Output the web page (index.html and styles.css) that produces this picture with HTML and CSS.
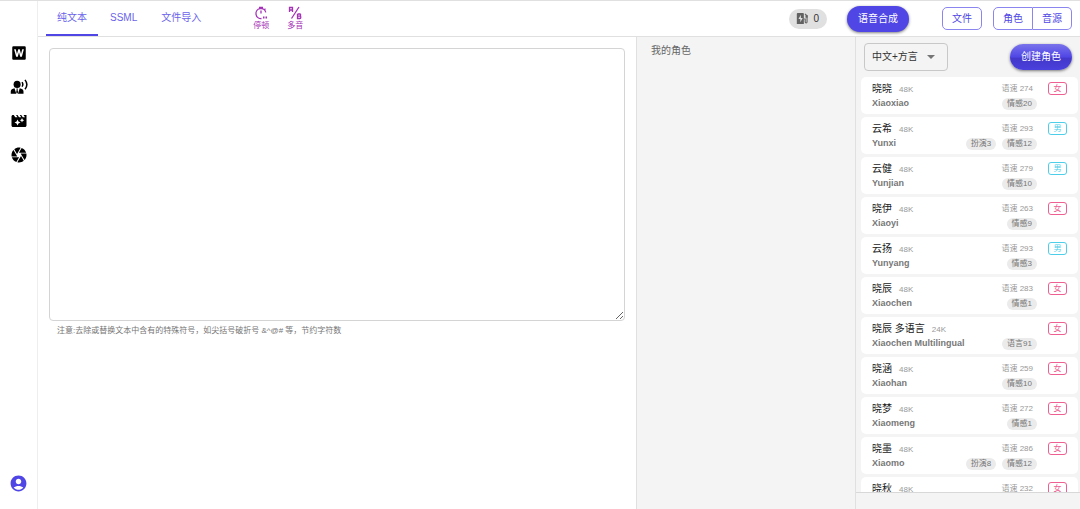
FILE: index.html
```
<!DOCTYPE html>
<html lang="zh-CN">
<head>
<meta charset="utf-8">
<meta name="viewport" content="width=device-width, initial-scale=1">
<title>语音合成</title>
<link rel="stylesheet" href="styles.css">
</head>
<body>
<div class="app">
  <nav class="sidebar" aria-label="主导航">
    <button class="side-btn" type="button" aria-label="文本">
      <svg class="icon" viewBox="0 0 24 24"><path fill-rule="evenodd" d="M4.500 3h15A1.500 1.500 0 0 1 21 4.500v15a1.500 1.500 0 0 1-1.500 1.500h-15A1.500 1.500 0 0 1 3 19.500v-15A1.500 1.500 0 0 1 4.500 3zM5.500 7l2.700 10h2.200L12 11l1.600 6h2.200l2.700-10h-2.200l-1.600 6.400L13 7h-2l-1.700 6.400L7.700 7z"/></svg>
    </button>
    <button class="side-btn" type="button" aria-label="语音">
      <svg class="icon" viewBox="0 0 24 24"><circle cx="9.500" cy="8.500" r="4.700"/><path d="M1 21v-3c0-2.400 2.200-3.800 5-4.300L8.400 21zM18 21v-3c0-2.400-2.200-3.800-5-4.300L10.600 21zM8.500 14h2l-.4 1.500.7 3.500-1.300 2-1.300-2 .7-3.500z"/><path class="line" d="M16 5.500q2.200 3 0 6M20 2.500q5 6.200 0 12.500"/></svg>
    </button>
    <button class="side-btn" type="button" aria-label="视频">
      <svg class="icon" viewBox="0 0 24 24"><path d="M18 4l2 3h-3l-2-3h-2l2 3h-3l-2-3H8l2 3H7L5 4H4c-1.100 0-1.990.9-1.990 2L2 18c0 1.100.9 2 2 2h16c1.100 0 2-.9 2-2V4h-4zm-6.750 11.250L10 18l-1.250-2.750L6 14l2.750-1.250L10 10l1.250 2.750L14 14l-2.750 1.250zm5.690-3.310L16 14l-.94-2.060L13 11l2.060-.94L16 8l.94 2.060L19 11l-2.060.94z"/></svg>
    </button>
    <button class="side-btn" type="button" aria-label="图像">
      <svg class="icon" viewBox="0 0 24 24"><path d="M9.400 10.500l4.770-8.260C13.470 2.090 12.750 2 12 2c-2.400 0-4.600.85-6.320 2.250l3.660 6.350.06-.1zM21.540 9c-.92-2.920-3.150-5.260-6-6.340L11.880 9h9.660zm.26 1h-7.490l.29.5 4.760 8.250C21 16.970 22 14.610 22 12c0-.69-.07-1.350-.2-2zM8.540 12l-3.900-6.750C3.010 7.030 2 9.390 2 12c0 .69.07 1.350.2 2h7.490l-1.150-2zm-6.080 3c.92 2.920 3.150 5.260 6 6.340L12.120 15H2.460zm11.270 0l-3.900 6.760c.7.15 1.420.24 2.170.24 2.400 0 4.600-.85 6.320-2.250l-3.660-6.350-.93 1.600z"/></svg>
    </button>
    <button class="side-btn account" type="button" aria-label="账户">
      <svg class="icon" viewBox="0 0 24 24"><path d="M12 2C6.480 2 2 6.480 2 12s4.480 10 10 10 10-4.480 10-10S17.520 2 12 2zm0 4c1.930 0 3.500 1.570 3.500 3.500S13.930 13 12 13s-3.500-1.570-3.500-3.500S10.070 6 12 6zm0 14c-2.030 0-4.430-.82-6.140-2.880C7.550 15.800 9.680 15 12 15s4.450.8 6.140 2.120C16.430 19.180 14.030 20 12 20z"/></svg>
    </button>
  </nav>

  <div class="content">
    <header class="topbar">
      <div class="tabs" role="tablist">
        <button class="tab active" type="button" role="tab" aria-selected="true">纯文本</button>
        <button class="tab" type="button" role="tab" aria-selected="false">SSML</button>
        <button class="tab" type="button" role="tab" aria-selected="false">文件导入</button>
      </div>
      <div class="tools">
        <button class="tool" type="button">
          <svg class="tool-icon" viewBox="0 0 14 14"><path class="line thin" d="M5 1.500h4M7 4.500v3M11.800 6.300A5 5 0 1 0 7.500 12.500M10.300 3.700l1.200-1"/><path d="M9 10.500h1.500v2H9zM11.500 10.500H13v2h-1.500z"/></svg>
          停顿
        </button>
        <button class="tool" type="button">
          <svg class="tool-icon" viewBox="0 0 14 14"><path class="line thin" d="M1.500 6V1.500h3V6M1.500 4h3M11 1L3.500 12.500M9.500 8v4.500H12q.8 0 .8-1.200T12 10.200H9.500M12 10.200q.6 0 .6-1.100T12 8H9.500"/></svg>
          多音
        </button>
      </div>
      <div class="actions">
        <div class="quota">
          <svg class="quota-icon" viewBox="0 0 24 24"><path fill-rule="evenodd" d="M3 2h10a1.500 1.500 0 0 1 1.500 1.500V22H1.500V3.500A1.500 1.500 0 0 1 3 2zM9 5l-4.500 8H8v6l4.500-8H9z"/><path class="line" d="M15 13h2v5.500q0 1.700 1.700 1.700t1.700-1.700V7L16.500 3.500"/><path d="M17.500 6h4v4.500h-4z"/></svg>
          <span>0</span>
        </div>
        <button class="pill synth" type="button">语音合成</button>
        <button class="outline file" type="button">文件</button>
        <div class="btn-group">
          <button class="outline" type="button">角色</button>
          <button class="outline" type="button">音源</button>
        </div>
      </div>
    </header>

    <main class="panels">
      <section class="editor">
        <textarea class="text-input" rows="17" aria-label="文本" aria-describedby="hint"></textarea>
        <p class="hint" id="hint">注意:去除或替换文本中含有的特殊符号，如尖括号破折号 &amp;^@# 等，节约字符数</p>
      </section>

      <section class="roles">
        <h2 class="roles-title">我的角色</h2>
      </section>

      <section class="sources">
        <div class="filter">
          <div class="select-wrap">
            <select class="select" aria-label="语言">
              <option>中文+方言</option>
            </select>
            <svg class="caret" viewBox="0 0 8 4"><path d="M0 0h8L4 4z"/></svg>
          </div>
          <button class="pill create" type="button">创建角色</button>
        </div>
        <ul class="voices">
          <li class="voice">
            <div class="names"><div class="name">晓晓<span class="rate">48K</span></div><div class="latin">Xiaoxiao</div></div>
            <div class="stats"><div class="speed">语速 274</div><div class="chips"><span class="chip">情感20</span></div></div>
            <span class="gender female">女</span>
          </li>
          <li class="voice">
            <div class="names"><div class="name">云希<span class="rate">48K</span></div><div class="latin">Yunxi</div></div>
            <div class="stats"><div class="speed">语速 293</div><div class="chips"><span class="chip">扮演3</span><span class="chip">情感12</span></div></div>
            <span class="gender male">男</span>
          </li>
          <li class="voice">
            <div class="names"><div class="name">云健<span class="rate">48K</span></div><div class="latin">Yunjian</div></div>
            <div class="stats"><div class="speed">语速 279</div><div class="chips"><span class="chip">情感10</span></div></div>
            <span class="gender male">男</span>
          </li>
          <li class="voice">
            <div class="names"><div class="name">晓伊<span class="rate">48K</span></div><div class="latin">Xiaoyi</div></div>
            <div class="stats"><div class="speed">语速 263</div><div class="chips"><span class="chip">情感9</span></div></div>
            <span class="gender female">女</span>
          </li>
          <li class="voice">
            <div class="names"><div class="name">云扬<span class="rate">48K</span></div><div class="latin">Yunyang</div></div>
            <div class="stats"><div class="speed">语速 293</div><div class="chips"><span class="chip">情感3</span></div></div>
            <span class="gender male">男</span>
          </li>
          <li class="voice">
            <div class="names"><div class="name">晓辰<span class="rate">48K</span></div><div class="latin">Xiaochen</div></div>
            <div class="stats"><div class="speed">语速 283</div><div class="chips"><span class="chip">情感1</span></div></div>
            <span class="gender female">女</span>
          </li>
          <li class="voice">
            <div class="names"><div class="name">晓辰 多语言<span class="rate">24K</span></div><div class="latin">Xiaochen Multilingual</div></div>
            <div class="stats"><div class="speed"></div><div class="chips"><span class="chip">语言91</span></div></div>
            <span class="gender female">女</span>
          </li>
          <li class="voice">
            <div class="names"><div class="name">晓涵<span class="rate">48K</span></div><div class="latin">Xiaohan</div></div>
            <div class="stats"><div class="speed">语速 259</div><div class="chips"><span class="chip">情感10</span></div></div>
            <span class="gender female">女</span>
          </li>
          <li class="voice">
            <div class="names"><div class="name">晓梦<span class="rate">48K</span></div><div class="latin">Xiaomeng</div></div>
            <div class="stats"><div class="speed">语速 272</div><div class="chips"><span class="chip">情感1</span></div></div>
            <span class="gender female">女</span>
          </li>
          <li class="voice">
            <div class="names"><div class="name">晓墨<span class="rate">48K</span></div><div class="latin">Xiaomo</div></div>
            <div class="stats"><div class="speed">语速 286</div><div class="chips"><span class="chip">扮演8</span><span class="chip">情感12</span></div></div>
            <span class="gender female">女</span>
          </li>
          <li class="voice">
            <div class="names"><div class="name">晓秋<span class="rate">48K</span></div></div>
            <div class="stats"><div class="speed">语速 232</div></div>
            <span class="gender female">女</span>
          </li>
        </ul>
        <div class="sources-footer"></div>
      </section>
    </main>
  </div>
</div>
</body>
</html>
```
FILE: styles.css
```
:root {
  --indigo: #4f46e5;
  --indigo-soft: #6a63ea;
  --purple: #a531b8;
  --panel: #f4f4f4;
  --line: #e0e0e0;
}

* { box-sizing: border-box; }

body {
  margin: 0;
  background: #fff;
  color: #333;
  font-family: "Liberation Sans", "Noto Sans CJK SC", sans-serif;
  font-size: 10px;
  line-height: 14px;
}

button, select, textarea {
  margin: 0;
  padding: 0;
  border: 0;
  background: none;
  color: inherit;
  font: inherit;
}

button { cursor: pointer; }

svg { display: block; fill: currentColor; }

.line { fill: none; stroke: currentColor; stroke-width: 2; }
.thin { stroke-width: 1.3; }

.app {
  display: flex;
  height: 100vh;
  border-top: 1px solid var(--line);
}

/* Sidebar */
.sidebar {
  display: flex;
  flex: none;
  flex-direction: column;
  align-items: center;
  gap: 16px;
  width: 38px;
  padding: 43px 0 16px;
  border-right: 1px solid #eee;
  color: #000;
}

.icon { width: 18px; height: 18px; }

.account { margin-top: auto; color: var(--indigo); }
.account .icon { width: 19px; height: 19px; }

.content {
  display: flex;
  flex: 1;
  flex-direction: column;
  min-width: 0;
}

/* Top bar */
.topbar {
  display: flex;
  flex: none;
  align-items: center;
  height: 36px;
  padding: 0 8px;
  border-bottom: 1px solid var(--line);
}

.tabs { display: flex; align-self: stretch; }

.tab {
  padding: 1px 11px 0;
  border-bottom: 2px solid transparent;
  color: var(--indigo-soft);
}
.tab + .tab { padding: 1px 12px 0; }
.tab.active { border-bottom-color: var(--indigo); }

.tools { display: flex; gap: 18px; margin-left: 40px; }

.tool {
  display: flex;
  flex-direction: column;
  align-items: center;
  color: var(--purple);
  font-size: 8px;
  line-height: 11px;
}
.tool-icon { width: 14px; height: 14px; }

.actions { display: flex; align-items: center; margin-left: auto; }

.quota {
  display: flex;
  align-items: center;
  gap: 4px;
  height: 20px;
  margin-right: 20px;
  padding: 0 8px 0 7px;
  border-radius: 10px;
  background: #e0e0e0;
}
.quota-icon { width: 13px; height: 13px; color: #616161; }

.pill {
  height: 26px;
  padding: 0 11px;
  border-radius: 13px;
  background: var(--indigo);
  box-shadow: 0 1px 3px rgba(0, 0, 0, .5);
  color: #fff;
}
.synth { margin-right: 33px; }
.create { background: linear-gradient(#7a73eb, #4f46e5 50%, #4338ca 55%, #4a40dc); }

.outline {
  height: 23px;
  padding: 0 9px;
  border: 1px solid #8b85ef;
  border-radius: 5px;
  color: var(--indigo);
}
.file { margin-right: 11px; }

.btn-group { display: flex; }
.btn-group .outline:first-child { border-radius: 5px 0 0 5px; }
.btn-group .outline:last-child { border-left: 0; border-radius: 0 5px 5px 0; }

/* Panels */
.panels { display: flex; flex: 1; min-height: 0; }

.editor { flex: 1; min-width: 0; padding: 11px; }

.text-input {
  display: block;
  width: 100%;
  padding: 8px;
  border: 1px solid #d4d4d4;
  border-radius: 4px;
  line-height: 15px;
  resize: vertical;
  outline: 0;
}

.hint {
  margin: 4px 8px 0;
  color: #757575;
  font-size: 8px;
  line-height: 12px;
}

.roles {
  flex: none;
  width: 219px;
  padding: 7px 14px;
  border-left: 1px solid var(--line);
  background: var(--panel);
}
.roles-title { margin: 0; color: #666; font-size: 10px; font-weight: 400; }

.sources {
  display: flex;
  flex: none;
  flex-direction: column;
  width: 225px;
  border-left: 1px solid var(--line);
  background: var(--panel);
}

.filter {
  display: flex;
  align-items: center;
  justify-content: space-between;
  padding: 6px 8px;
}

.select-wrap { position: relative; }

.select {
  display: block;
  width: 84px;
  height: 28px;
  padding: 0 24px 0 7px;
  border: 1px solid #c8c8c8;
  border-radius: 4px;
  appearance: none;
}

.caret {
  position: absolute;
  top: 12px;
  right: 13px;
  width: 8px;
  height: 4px;
  color: #757575;
  pointer-events: none;
}

.voices {
  flex: 1;
  min-height: 0;
  margin: 0;
  padding: 0 2px 0 5px;
  overflow-y: auto;
  scrollbar-width: none;
  list-style: none;
}

.voice {
  display: flex;
  align-items: flex-start;
  margin-bottom: 3px;
  padding: 5px 11px 4px;
  border-radius: 5px;
  background: #fff;
}

.names { flex: 1; white-space: nowrap; }
.name { height: 14px; color: #222; }
.rate { margin-left: 7px; color: #999; font-size: 8px; }
.latin { height: 14px; color: #777; font-size: 9px; font-weight: 700; line-height: 14px; }

.stats { margin-right: 11px; }

.speed {
  height: 14px;
  padding-right: 4px;
  color: #999;
  font-size: 8px;
  text-align: right;
}

.chips { display: flex; justify-content: flex-end; gap: 6px; height: 14px; padding-top: 2px; }

.chip {
  height: 12px;
  padding: 0 5px;
  border-radius: 6px;
  background: #ebebeb;
  color: #757575;
  font-size: 8px;
  line-height: 12px;
}

.gender {
  width: 19px;
  height: 13px;
  border: 1px solid currentColor;
  border-radius: 3px;
  font-size: 8px;
  line-height: 11px;
  text-align: center;
}
.female { color: #ee5f92; }
.male { color: #4dcfea; }

.sources-footer { flex: none; height: 17px; border-top: 1px solid #d8d8d8; }
```
